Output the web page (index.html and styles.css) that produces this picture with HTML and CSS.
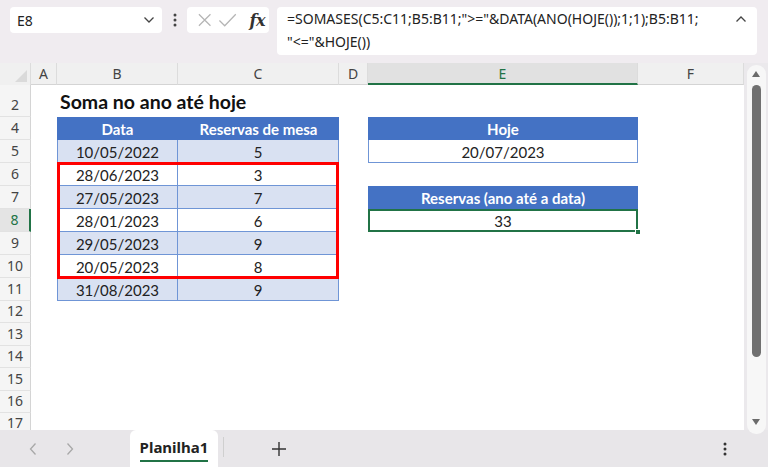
FILE: index.html
```html
<!DOCTYPE html>
<html lang="pt">
<head>
<meta charset="utf-8">
<title>Planilha1</title>
<link rel="stylesheet" href="styles.css">
</head>
<body>
<div class="app">
  <div class="topbar">
    <div class="namebox">
      <span class="nb-text">E8</span>
      <svg class="nb-chev" width="12" height="8" viewBox="0 0 12 8"><path d="M1.5 1.5 L6 6 L10.5 1.5" fill="none" stroke="#444" stroke-width="1.3"/></svg>
    </div>
    <div class="kebab">
      <svg width="4" height="14" viewBox="0 0 4 14"><circle cx="2" cy="2" r="1.5" fill="#444"/><circle cx="2" cy="7" r="1.5" fill="#444"/><circle cx="2" cy="12" r="1.5" fill="#444"/></svg>
    </div>
    <div class="fxbox">
      <svg class="fx-x" width="16" height="16" viewBox="0 0 16 16"><path d="M2 2 L14 14 M14 2 L2 14" stroke="#b5b5b5" stroke-width="1.3" fill="none"/></svg>
      <svg class="fx-ok" width="20" height="16" viewBox="0 0 20 16"><path d="M1.5 8.5 L7 14 L18.5 2" stroke="#b5b5b5" stroke-width="1.3" fill="none"/></svg>
      <span class="fx-label">fx</span>
    </div>
    <div class="formula">
      <div class="ftext">=SOMASES(C5:C11;B5:B11;"&gt;="&amp;DATA(ANO(HOJE());1;1);B5:B11;<br>"&lt;="&amp;HOJE())</div>
      <svg class="fcaret" width="12" height="8" viewBox="0 0 12 8"><path d="M1.5 6.5 L6 2 L10.5 6.5" fill="none" stroke="#444" stroke-width="1.3"/></svg>
    </div>
  </div>

  <div class="main">
    <div class="sheet">
      <div class="row hdr">
        <div class="corner"><span class="tri"></span></div>
        <div class="ch">A</div><div class="ch">B</div><div class="ch">C</div><div class="ch">D</div><div class="ch sel">E</div><div class="ch">F</div>
      </div>
      <div class="row r2">
        <div class="rh">2</div><div></div><div class="title">Soma no ano até hoje</div><div></div><div></div><div></div><div></div>
      </div>
      <div class="row">
        <div class="rh">4</div><div></div><div class="c th first">Data</div><div class="c th">Reservas de mesa</div><div></div><div class="c th first">Hoje</div><div></div>
      </div>
      <div class="row">
        <div class="rh">5</div><div></div><div class="c t alt first">10/05/2022</div><div class="c t alt">5</div><div></div><div class="c t first">20/07/2023</div><div></div>
      </div>
      <div class="row">
        <div class="rh">6</div><div></div><div class="c t first">28/06/2023</div><div class="c t">3</div><div></div><div></div><div></div>
      </div>
      <div class="row">
        <div class="rh">7</div><div></div><div class="c t alt first">27/05/2023</div><div class="c t alt">7</div><div></div><div class="c th">Reservas (ano até a data)</div><div></div>
      </div>
      <div class="row">
        <div class="rh sel">8</div><div></div><div class="c t first">28/01/2023</div><div class="c t">6</div><div></div><div class="c active">33<span class="handle"></span></div><div></div>
      </div>
      <div class="row">
        <div class="rh">9</div><div></div><div class="c t alt first">29/05/2023</div><div class="c t alt">9</div><div></div><div></div><div></div>
      </div>
      <div class="row">
        <div class="rh">10</div><div></div><div class="c t first">20/05/2023</div><div class="c t">8</div><div></div><div></div><div></div>
      </div>
      <div class="row">
        <div class="rh">11</div><div></div><div class="c t alt first">31/08/2023</div><div class="c t alt">9</div><div></div><div></div><div></div>
      </div>
      <div class="row sm"><div class="rh">12</div></div>
      <div class="row sm"><div class="rh">13</div></div>
      <div class="row sm"><div class="rh">14</div></div>
      <div class="row sm"><div class="rh">15</div></div>
      <div class="row sm"><div class="rh">16</div></div>
      <div class="row sm"><div class="rh">17</div></div>
      <div class="redbox"></div>
    </div>
    <div class="vscroll">
      <div class="track">
        <span class="arrow-up"></span>
        <span class="thumb"></span>
        <span class="arrow-down"></span>
      </div>
    </div>
  </div>

  <div class="bottombar">
    <div class="nav">
      <svg width="10" height="14" viewBox="0 0 10 14"><path d="M7.5 1.5 L2.5 7 L7.5 12.5" fill="none" stroke="#a8a8a8" stroke-width="1.3"/></svg>
      <svg width="10" height="14" viewBox="0 0 10 14"><path d="M2.5 1.5 L7.5 7 L2.5 12.5" fill="none" stroke="#a8a8a8" stroke-width="1.3"/></svg>
    </div>
    <div class="tab"><span class="tab-label">Planilha1</span></div>
    <div class="sep"></div>
    <div class="add">
      <svg width="16" height="16" viewBox="0 0 16 16"><path d="M8 1 V15 M1 8 H15" stroke="#333" stroke-width="1.4" fill="none"/></svg>
    </div>
    <div class="spacer"></div>
    <div class="more">
      <svg width="4" height="14" viewBox="0 0 4 14"><circle cx="2" cy="2" r="1.5" fill="#333"/><circle cx="2" cy="7" r="1.5" fill="#333"/><circle cx="2" cy="12" r="1.5" fill="#333"/></svg>
    </div>
  </div>
</div>
</body>
</html>
```

FILE: styles.css
```css
* { box-sizing: border-box; }
html, body { margin: 0; padding: 0; }
body { background: #ffffff; }

.app {
  width: 768px;
  height: 467px;
  overflow: hidden;
  background: #eeeaee;
  font-family: "Noto Sans", "Open Sans", sans-serif;
  color: #222;
  display: flex;
  flex-direction: column;
}

/* ---------- formula bar ---------- */
.topbar {
  height: 63px;
  flex: none;
  display: flex;
  align-items: flex-start;
  padding: 7px 0 0 10px;
  background: #f0ecf0;
}
.namebox {
  width: 152px;
  height: 26px;
  background: #fff;
  border-radius: 4px;
  display: flex;
  align-items: center;
  padding: 0 7px 0 7px;
  font-size: 14px;
  color: #222;
}
.nb-text { flex: 1; }
.kebab {
  width: 25px;
  height: 26px;
  display: flex;
  align-items: center;
  justify-content: center;
}
.fxbox {
  width: 82px;
  height: 26px;
  background: #fff;
  border-radius: 4px;
  display: flex;
  align-items: center;
  padding: 0 4px 0 10px;
  gap: 6px;
}
.fx-label {
  font-family: "DejaVu Serif", "Liberation Serif", serif;
  font-style: italic;
  font-weight: bold;
  font-size: 16px;
  color: #333;
  margin-left: 6px;
  letter-spacing: -0.5px;
}
.formula {
  margin-left: 8px;
  width: 480px;
  height: 48px;
  background: #fff;
  border-radius: 4px;
  display: flex;
  align-items: flex-start;
  padding: 0 10px 0 10px;
}
.ftext {
  flex: 1;
  font-size: 14px;
  line-height: 23px;
  color: #222;
  white-space: nowrap;
}
.fcaret { margin-top: 8px; }

/* ---------- sheet ---------- */
.main {
  height: 367px;
  flex: none;
  display: flex;
  background: #ebe9ec;
}
.sheet {
  position: relative;
  width: 744px;
  height: 367px;
  background: #fff;
  overflow: hidden;
}
.row {
  display: grid;
  grid-template-columns: 31px 26px 121px 161px 29px 270px 106px;
  height: 23px;
}
.row.hdr { height: 22px; background: #f0f0f0; }
.row.r2 { height: 32px; }
.row.sm { height: 22.4px; }

.corner {
  position: relative;
  background: #f0f0f0;
  border-right: 1px solid #dcdcdc;
}
.tri {
  position: absolute;
  right: 3px;
  bottom: 3px;
  width: 0;
  height: 0;
  border-left: 12px solid transparent;
  border-bottom: 12px solid #dadada;
}
.ch {
  display: flex;
  align-items: center;
  justify-content: center;
  font-size: 14px;
  color: #444;
  border-right: 1px solid #dcdcdc;
  border-bottom: 1px solid #d4d4d4;
}
.ch.sel {
  background: #e1e1e1;
  color: #217346;
  border-bottom: 2px solid #217346;
}
.rh {
  display: flex;
  align-items: flex-end;
  justify-content: center;
  padding-bottom: 1px;
  font-size: 14px;
  line-height: 20px;
  color: #444;
  background: #f5f5f5;
  border-right: 1px solid #d4d4d4;
  border-bottom: 1px solid #e2e2e2;
}
.rh.sel {
  background: #e4e4e4;
  color: #217346;
  border-right: 2px solid #217346;
}

.title {
  font-family: "Lato", "Open Sans", sans-serif;
  font-weight: bold;
  font-size: 19.5px;
  line-height: 24px;
  white-space: nowrap;
  padding: 5px 0 0 3px;
  color: #111;
}

.c {
  display: flex;
  align-items: center;
  justify-content: center;
  font-family: "Lato", "Open Sans", sans-serif;
  font-size: 15px;
  color: #222;
  white-space: nowrap;
  padding-top: 1px;
}
.th {
  background: #4472c4;
  color: #fff;
  font-weight: bold;
}
.t {
  border-right: 1px solid #6f95d6;
  border-bottom: 1px solid #6f95d6;
  background: #fff;
}
.t.first { border-left: 1px solid #6f95d6; }
.alt { background: #d9e1f2; }

.active {
  position: relative;
  background: #fff;
}
.active::after {
  content: "";
  position: absolute;
  left: 0;
  top: 0;
  right: 0;
  bottom: 0;
  border: 2px solid #217346;
}
.handle {
  position: absolute;
  right: -3px;
  bottom: -3px;
  width: 6px;
  height: 6px;
  background: #217346;
  border: 1px solid #fff;
  z-index: 2;
}

.redbox {
  position: absolute;
  left: 57px;
  top: 99px;
  width: 282px;
  height: 117px;
  border: 3px solid #ff0000;
  pointer-events: none;
}

/* ---------- scrollbar ---------- */
.vscroll {
  width: 24px;
  padding: 2px 2px 0 3px;
}
.track {
  position: relative;
  height: 369px;
  background: #f7f7f7;
  border-radius: 9px;
}
.arrow-up {
  position: absolute;
  left: 5px;
  top: 6px;
  width: 0;
  height: 0;
  border-left: 4.5px solid transparent;
  border-right: 4.5px solid transparent;
  border-bottom: 6px solid #6b6b6b;
}
.arrow-down {
  position: absolute;
  left: 5px;
  top: 354px;
  width: 0;
  height: 0;
  border-left: 4.5px solid transparent;
  border-right: 4.5px solid transparent;
  border-top: 6px solid #6b6b6b;
}
.thumb {
  position: absolute;
  left: 5px;
  top: 20px;
  width: 9px;
  height: 272px;
  background: #707070;
  border-radius: 5px;
}

/* ---------- bottom bar ---------- */
.bottombar {
  flex: 1;
  display: flex;
  align-items: stretch;
  background: #e8e6e9;
}
.nav {
  width: 130px;
  display: flex;
  align-items: center;
  gap: 27px;
  padding-left: 28px;
}
.tab {
  width: 88px;
  background: #fff;
  border-radius: 6px 6px 0 0;
  display: flex;
  justify-content: center;
  align-items: center;
}
.tab-label {
  font-size: 15px;
  font-weight: bold;
  color: #222;
  padding-bottom: 3px;
  border-bottom: 2px solid #217346;
  line-height: 20px;
  margin-top: 2px;
}
.sep {
  width: 1px;
  margin: 7px 0 10px 5px;
  background: #cfcfcf;
}
.add {
  width: 110px;
  display: flex;
  align-items: center;
  justify-content: center;
}
.spacer { flex: 1; }
.more {
  width: 46px;
  display: flex;
  align-items: center;
  justify-content: flex-start;
  padding-left: 1px;
}
```
